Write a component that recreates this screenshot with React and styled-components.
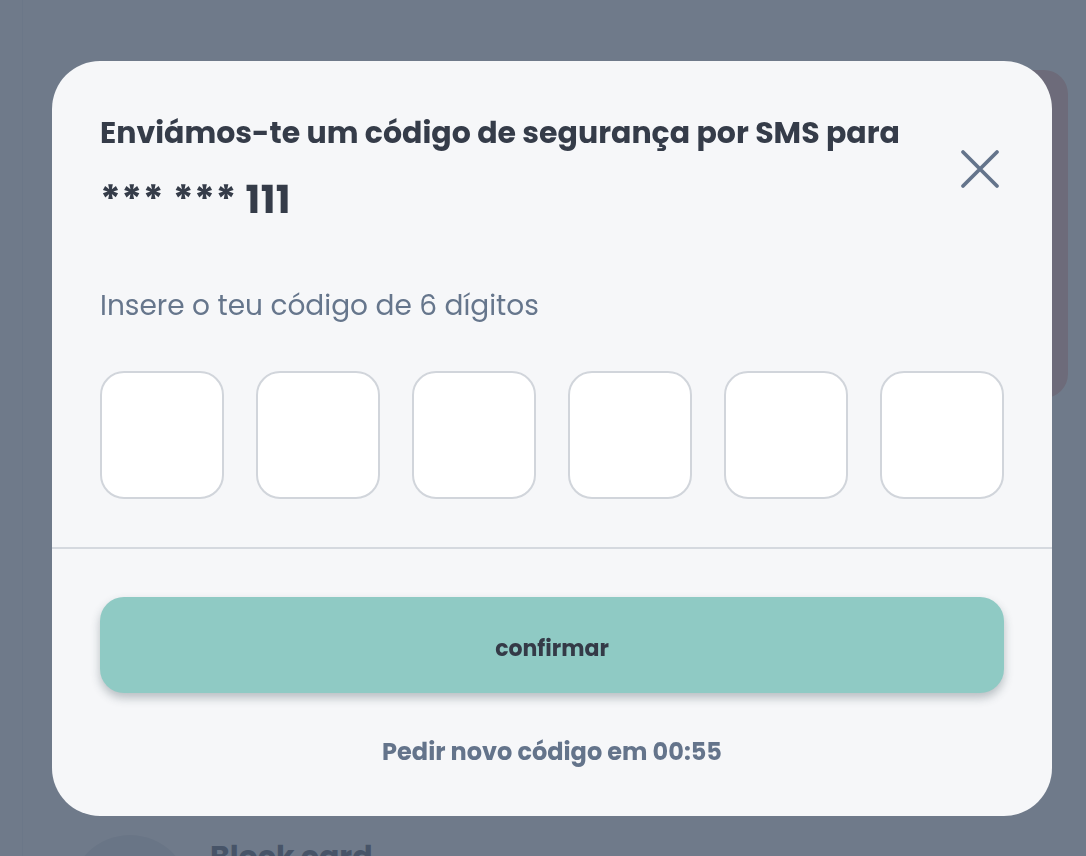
import React, { useState } from 'react'
import styled, { createGlobalStyle } from 'styled-components'

const GlobalStyle = createGlobalStyle`
    * {
        box-sizing: border-box;
    }
    body {
        margin: 0;
        font-family: 'Poppins', 'Inter', 'Noto Sans', sans-serif;
        background: #ffffff;
    }
`

// page behind the overlay
const Page = styled.div`
    height: 100vh;
    overflow: hidden;
    padding: 0 18px 0 22px;
`
const Panel = styled.div`
    height: 100%;
    border-left: 1px solid #eef0f3;
    display: flex;
    flex-direction: column;
`
const Hero = styled.div`
    flex-shrink: 0;
    margin: 70px 0 0 48px;
    height: 328px;
    border-radius: 24px;
    background: #f6bcb4;
`
const BlockRow = styled.div`
    flex-shrink: 0;
    margin: 437px 0 0 47px;
    display: flex;
    align-items: flex-start;
    gap: 20px;
`
const Avatar = styled.div`
    width: 120px;
    height: 120px;
    flex-shrink: 0;
    border-radius: 50%;
    background: #e5e7eb;
`
const BlockTitle = styled.div`
    font-size: 30px;
    line-height: 44px;
    font-weight: 700;
    color: #4b5563;
`

// modal
const Overlay = styled.div`
    position: fixed;
    inset: 0;
    background: rgba(71, 85, 105, 0.78);
    display: flex;
    align-items: flex-start;
    padding: 61px 0 0 52px;
`
const Modal = styled.div`
    width: 1000px;
    border-radius: 48px;
    background: #f6f7f9;
    overflow: hidden;
`
const TopSection = styled.div`
    padding: 48px 48px 48px;
`
const Header = styled.div`
    display: flex;
    align-items: center;
    justify-content: space-between;
`
const Title = styled.h2`
    margin: 0;
    font-weight: 700;
    color: #353c49;
`
const TitleLine = styled.span`
    display: block;
    font-size: 30px;
    line-height: 48px;
`
const Phone = styled.span`
    display: block;
    margin-top: 15px;
    font-size: 39px;
    line-height: 56px;
    letter-spacing: 0.5px;
`
const CloseButton = styled.button`
    width: 48px;
    height: 48px;
    padding: 0;
    border: none;
    background: none;
    cursor: pointer;
    color: #64748b;
    display: flex;
    align-items: center;
    justify-content: center;
`
const Hint = styled.p`
    margin: 58px 0 0;
    font-size: 28px;
    line-height: 40px;
    color: #66768c;
`
const CodeRow = styled.div`
    margin-top: 45px;
    display: grid;
    grid-template-columns: repeat(6, 124px);
    gap: 32px;
`
const CodeInput = styled.input`
    width: 124px;
    height: 128px;
    border: 2px solid #d1d5db;
    border-radius: 24px;
    background: #ffffff;
    font-family: inherit;
    font-size: 40px;
    font-weight: 700;
    text-align: center;
    color: #353c49;
    outline: none;
    &:focus {
        border-color: #8fcac4;
    }
`
const Divider = styled.hr`
    margin: 0;
    border: none;
    height: 2px;
    background: #d5d9df;
`
const BottomSection = styled.div`
    padding: 48px 48px 46px;
    display: flex;
    flex-direction: column;
    align-items: stretch;
`
const ConfirmButton = styled.button`
    height: 96px;
    padding: 6px 0 0;
    border: none;
    border-radius: 24px;
    background: #8fcac4;
    box-shadow: 0 5px 10px rgba(40, 60, 70, 0.3);
    font-family: inherit;
    font-size: 22px;
    font-weight: 700;
    color: #343a47;
    cursor: pointer;
`
const Resend = styled.div`
    margin-top: 41px;
    text-align: center;
    font-size: 24px;
    line-height: 36px;
    font-weight: 700;
    color: #64748b;
`

function CloseIcon() {
    return (
        <svg width="48" height="48" viewBox="0 0 48 48" fill="none">
            <path d="M7 7L41 41M41 7L7 41" stroke="currentColor" strokeWidth="3.8" strokeLinecap="round" />
        </svg>
    )
}

function App() {
    const [code, setCode] = useState(['', '', '', '', '', ''])

    const onChange = (idx) => (e) => {
        const value = e.target.value.replace(/\D/g, '').slice(-1)
        const next = [...code]
        next[idx] = value
        setCode(next)
    }

    return (
        <>
            <GlobalStyle />
            <Page>
                <Panel>
                    <Hero />
                    <BlockRow>
                        <Avatar />
                        <BlockTitle>Block card</BlockTitle>
                    </BlockRow>
                </Panel>
            </Page>
            <Overlay>
                <Modal>
                    <TopSection>
                        <Header>
                            <Title>
                                <TitleLine>Enviámos-te um código de segurança por SMS para</TitleLine>
                                <Phone>*** *** 111</Phone>
                            </Title>
                            <CloseButton aria-label="fechar">
                                <CloseIcon />
                            </CloseButton>
                        </Header>
                        <Hint>Insere o teu código de 6 dígitos</Hint>
                        <CodeRow>
                            {code.map((digit, idx) => (
                                <CodeInput
                                    key={idx}
                                    value={digit}
                                    onChange={onChange(idx)}
                                    inputMode="numeric"
                                />
                            ))}
                        </CodeRow>
                    </TopSection>
                    <Divider />
                    <BottomSection>
                        <ConfirmButton>confirmar</ConfirmButton>
                        <Resend>Pedir novo código em 00:55</Resend>
                    </BottomSection>
                </Modal>
            </Overlay>
        </>
    )
}

export default App
